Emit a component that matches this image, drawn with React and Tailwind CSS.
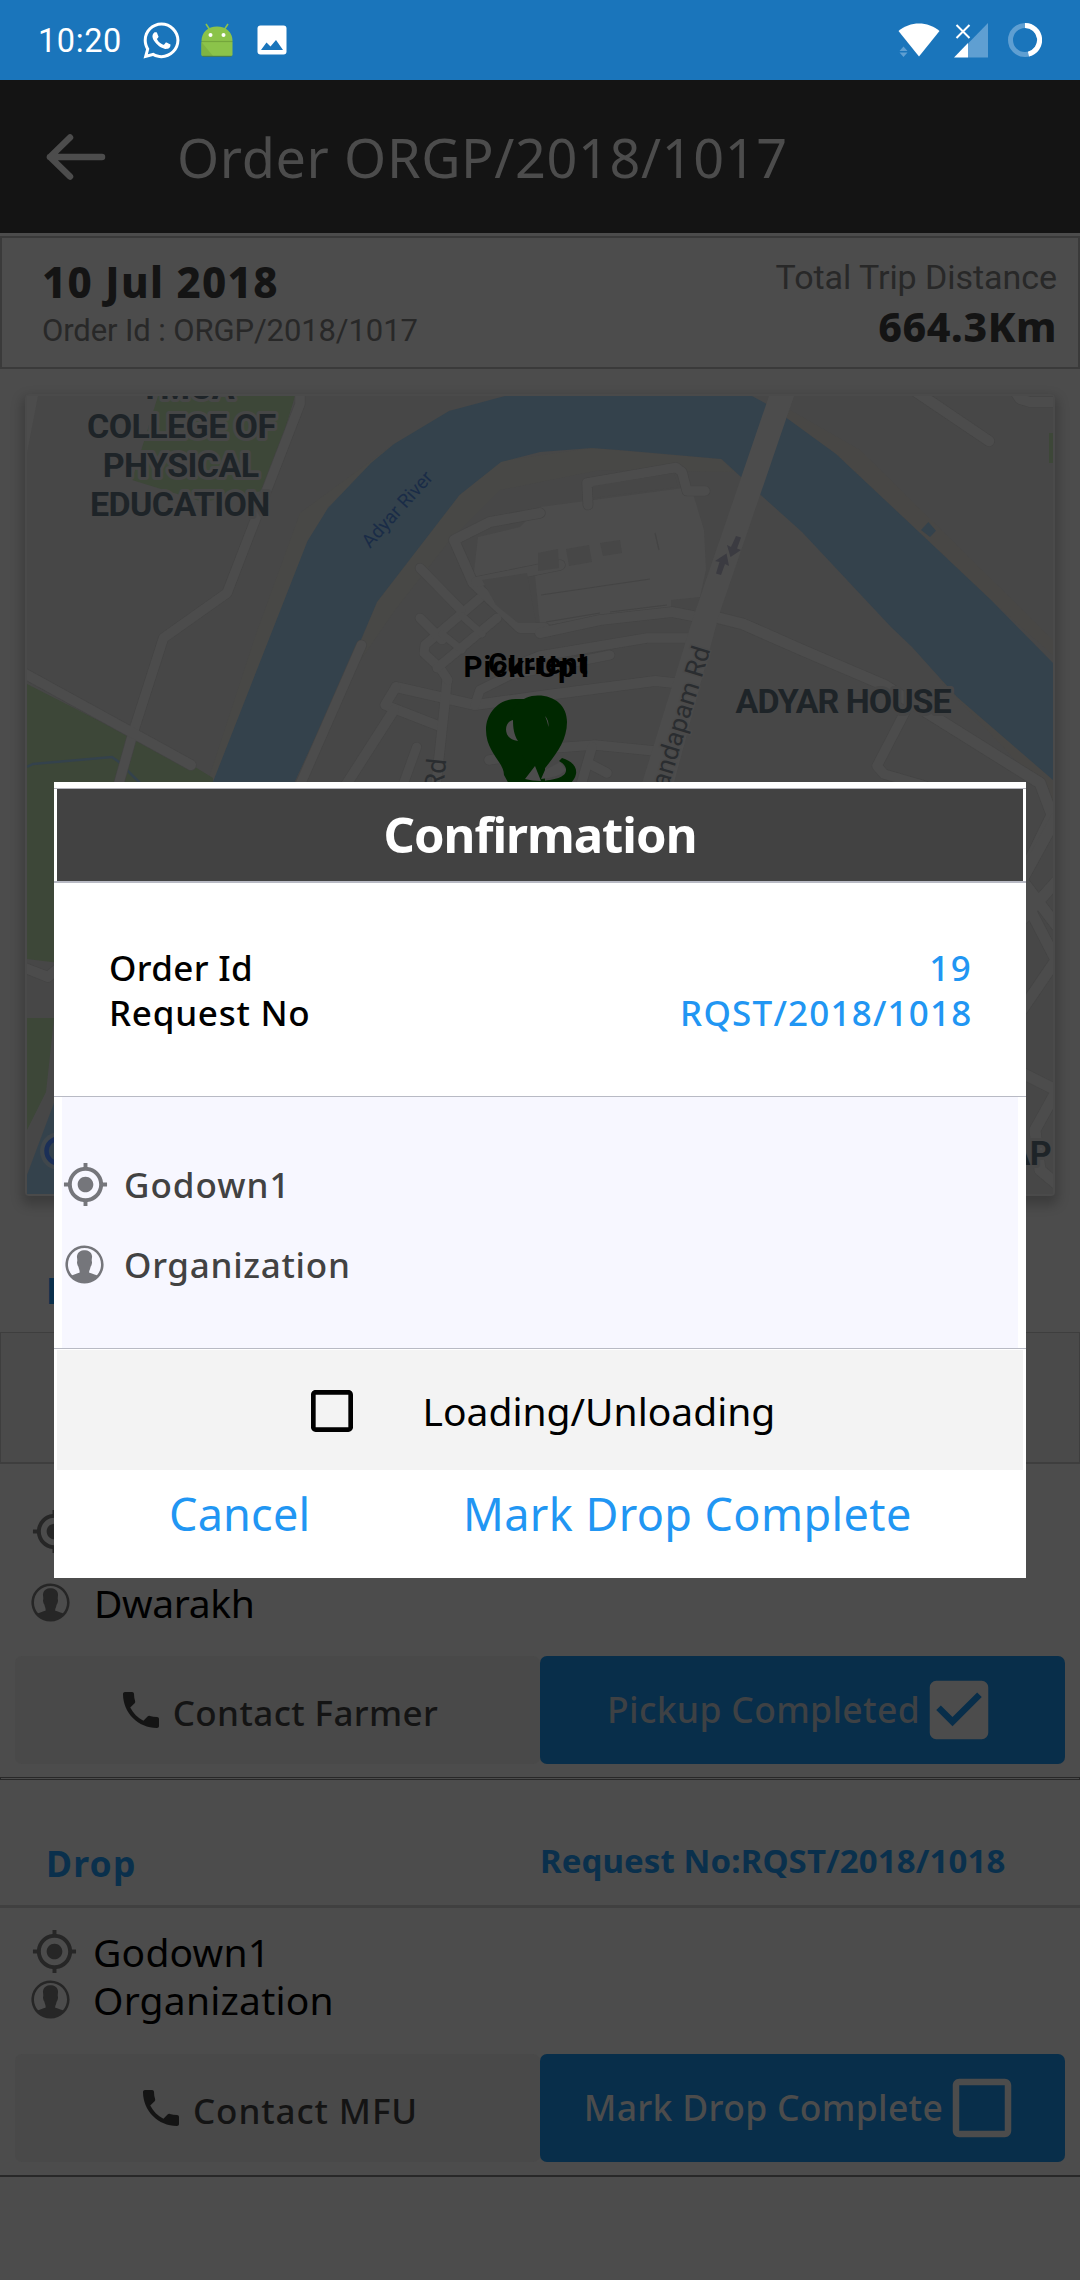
import React from "react";
import { MdCheckBox, MdCheckBoxOutlineBlank, MdMyLocation, MdPhone } from "react-icons/md";
import { IoIosContact } from "react-icons/io";
import { FaWhatsapp } from "react-icons/fa";

function StatusBar() {
  return (
    <div className="flex h-[80px] shrink-0 items-center bg-[#1a75bb] pl-[38px] pr-[38px] text-white">
      <span className="w-[105px] pt-[3px] font-[Roboto,sans-serif] text-[32.5px] leading-none tracking-[0.6px]">10:20</span>
      <FaWhatsapp className="h-[41px] w-[37px]" />
      <svg className="ml-[21px] h-[36px] w-[32px]" viewBox="0 0 32 36">
        <path d="M5 2l4 6M27 2l-4 6" stroke="#8bc34a" strokeWidth="1.6" />
        <path d="M.5 19C.5 10 7 4.500 16 4.500S31.500 10 31.500 19z" fill="#8bc34a" />
        <path d="M.5 20h31v12.500a1.500 1.500 0 0 1-1.500 1.500H2a1.500 1.500 0 0 1-1.500-1.500z" fill="#8bc34a" />
        <path d="M.5 19.500h31" stroke="#74a63c" strokeWidth="1.200" />
        <path d="M.5 20L12 34H2a1.500 1.500 0 0 1-1.500-1.500z" fill="#7fb443" />
        <path d="M1.500 34.300h29" stroke="#4d7d45" strokeWidth="1" />
        <circle cx="9.500" cy="13" r="2" fill="#fff" />
        <circle cx="22.500" cy="13" r="2" fill="#fff" />
      </svg>
      <svg className="ml-[23.500px] h-[30px] w-[30px]" viewBox="0 0 30 30">
        <rect x="0.500" y="0.500" width="29" height="29" rx="3" fill="#fff" />
        <path d="M4 25l5.500-7.500 4 4 5.500-6.500 7 10z" fill="#1a75bb" />
      </svg>
      <svg className="ml-auto h-[34px] w-[42px]" viewBox="0 0 42 34">
        <path d="M0.500 8C12-2 30-2 41.500 8L21 33.500z" fill="#fff" />
        <path d="M1.500 28l4-4.500 4 4.500zM1.500 29.500l4 4.500 4-4.500z" fill="#5f9fd2" />
      </svg>
      <svg className="ml-[14px] h-[35px] w-[34px]" viewBox="0 0 34 35">
        <path d="M34 0v34.500H14V20.500z" fill="#5f9fd2" />
        <path d="M14 20v14.500H0z" fill="#fff" />
        <path d="M2.500 2l13 13M15.500 2l-13 13" stroke="#fff" strokeWidth="2" />
      </svg>
      <svg className="ml-[20px] h-[34px] w-[34px]" viewBox="0 0 34 34">
        <circle cx="17" cy="17" r="14.500" fill="none" stroke="#5f9fd2" strokeWidth="5" />
        <path d="M17 2.500a14.500 14.500 0 0 1 3.500 28.600" fill="none" stroke="#fff" strokeWidth="5" />
      </svg>
    </div>
  );
}

function Header() {
  return (
    <div className="flex h-[153px] shrink-0 items-center bg-[#141414] pl-[46px] text-[#4c4c4c]">
      <svg className="h-[46px] w-[60px]" viewBox="0 0 60 46">
        <path d="M56 23H4M24 3.500L4 23l20 19.500" fill="none" stroke="currentColor" strokeWidth="6.500" strokeLinecap="round" strokeLinejoin="round" />
      </svg>
      <h1 className="ml-[71px] text-[54px] leading-none tracking-[0.62px]">Order ORGP/2018/1017</h1>
    </div>
  );
}

function Summary() {
  return (
    <div className="mt-[3px] flex h-[133px] shrink-0 justify-between border-2 border-[#3a3a3a] pl-[40px] pr-[21px]">
      <div className="flex flex-col pt-[19px]">
        <span className="text-[42px] font-extrabold leading-[50px] tracking-[1.3px] text-[#141414]">10 Jul 2018</span>
        <span className="font-[Roboto,sans-serif] text-[31px] leading-[48px] tracking-[-0.11px] text-[#282828]">Order Id : ORGP/2018/1017</span>
      </div>
      <div className="flex flex-col items-end pt-[15px]">
        <span className="font-[Roboto,sans-serif] text-[34px] leading-[48px] tracking-[-0.05px] text-[#282828]">Total Trip Distance</span>
        <span className="text-[41px] font-extrabold leading-[50px] tracking-[0.6px] text-[#141414]">664.3Km</span>
      </div>
    </div>
  );
}

const ROADS = [
  ["M300 390V404L227 593L163.500 638L133 733L117 790", 9.5],
  ["M20 671L191 765", 10],
  ["M361.500 645L300 785", 9.5],
  ["M416.700 747L403 785", 9],
  ["M396 687L475 705L540 696L655 681L674 683", 10],
  ["M396 687L385 705L439 726", 9.5],
  ["M394 710L346 785", 10],
  ["M447 680L445 702L436 785", 9.5],
  ["M448 680L440 668L424 653L425 645L480 598", 9],
  ["M475 705L480 690L510 675L610 655", 9],
  ["M420 568L461 610", 9],
  ["M420 618L442 640", 9],
  ["M497 618L437 668", 9],
  ["M442 634L462 650M462 616L482 634", 7],
  ["M540 513L490 522L454 540L473 583L520 628H545", 10],
  ["M476 582L560 565", 10],
  ["M540 633L600 620L672 612L693 616", 10],
  ["M520 664L540 656L647 638H690", 9.5],
  ["M540 749L595 745L655 751", 9.5],
  ["M592 747L581 785M588 763L607 773", 9.5],
  ["M489 760L530 754", 9.5],
  ["M588 505L587 483L676 467.500L682 472L687 491H705", 9.5],
  ["M715 617L743 624L802 650L884 685L912 703L1040 783L1052 815L1030 860", 11],
  ["M905 712L877 766L884 774L925 786", 9.5],
  ["M915 391L989 441", 10.5],
  ["M1014 390L1020 399L1030 402H1056", 10],
  ["M1056 818L1022 880L1056 925M1020 922L1056 882M1020 890L1056 960M1056 960L1022 1010M1024 900L1005 925", 11],
  ["M1020 1072L1056 1090M1056 1092L1035 1130L1040 1170L1058 1185", 11],
  ["M20 966L48 977L62 965", 10],
];

function MapView() {
  return (
    <svg className="block h-[798px] w-[1026px] bg-[#474747]" viewBox="27 396 1026 798">
      <path d="M475 410L449 411L394 444L300 513L255 637L205 790H240L328 507L510 396zM340 690L377 602L459 495L501 461L592 448L721 459L735 472L600 470L500 490L450 540L395 610z" fill="#4a4944" opacity=".45" />
      <path d="M785 419L836 454L991 600L1053 655V640L860 450L790 410zM940 680L1053 800V760L960 690z" fill="#4a4944" opacity=".4" />
      <path d="M158 396H295L267 490L203 502L132 480z" fill="#3d4738" />
      <path d="M27 684L131 737L113 790V963H60L27 959zM136 740L195 767L213 778V786H118zM27 1018H54L46 1092L27 1130z" fill="#3d4738" />
      <path d="M27 767L33 764L112 757L119 762L145 788" fill="none" stroke="#34424c" strokeWidth="2.500" />
      <path d="M209 792L307.500 541L328 508L371 463L394 444L449 411L505 396H752L765 403L788 419L836 454L919 532L991 600L1053 663V780L957 697L912 647L891 627L802 532L763 497L741 477L721.500 459L619 450L592 448L540 452L501 462L459.500 495L377 602L360 642L290 792z" fill="#34424c" />
      <path d="M27 1175L54 1103V1194H27z" fill="#34424c" />
      <path d="M928.400 522L936 530.700L930 537L921 530z" fill="#34424c" />
      <path d="M1049 433h4v30h-4z" fill="#3d4738" />
      <path d="M27 396H38L27 453z" fill="#4c4c4c" />
      <path d="M478 537L520 527L540 507L691 487L704 530L706 570L700 597L671 600V608L540 626L535 575L473 580z" fill="#4c4c4c" />
      {ROADS.map(([d, w]) => (
        <path key={d} d={d} fill="none" stroke="#444444" strokeWidth={w + 1.2} strokeLinecap="round" strokeLinejoin="round" />
      ))}
      {ROADS.map(([d, w]) => (
        <path key={d} d={d} fill="none" stroke="#4c4c4c" strokeWidth={w} strokeLinecap="round" strokeLinejoin="round" />
      ))}
      <path d="M769 396H794L719 615L672 790H640L693 618z" fill="#4c4c4c" />
      <path d="M538 553L558 549L559 568L538 571zM566 549L589 545L592 562L569 566zM600 543L620 540L622 553L603 556zM482 580L527 573L536 623H518L496 605zM593 486L674 473L678 487L593 498z" fill="#474747" />
      <path d="M541 595L650 579M655 533L659 550M610 612L667 605M546 622L600 613" stroke="#444" strokeWidth="1.200" />
      <path d="M741 537.500L736 536L731 547L727 545L730.500 557L741 550L737 548.500zM716 573.500L721 575L725 564L729 566L726.500 553.500L715 561L719.500 562z" fill="#3b3b41" />
      <g fontFamily="Roboto, sans-serif" fontSize="34" fontWeight="700" fill="#1e2428" stroke="#474747" strokeWidth="6" paintOrder="stroke" strokeLinejoin="round" letterSpacing="-0.600">
        <text x="139.500" y="398.700" letterSpacing="-0.300">YMCA</text>
        <text x="87" y="437.700">COLLEGE OF</text>
        <text x="102.700" y="476.700">PHYSICAL</text>
        <text x="90" y="515.700">EDUCATION</text>
        <text x="735.600" y="713" letterSpacing="-1">ADYAR HOUSE</text>
        <text x="1007.500" y="1165">AP</text>
      </g>
      <text transform="translate(370 549) rotate(-48)" fontFamily="Roboto, sans-serif" fontSize="19" fill="#1a2c47">Adyar River</text>
      <text transform="translate(443 791) rotate(-84)" fontFamily="Roboto, sans-serif" fontSize="27" fill="#2a2d30">Rd</text>
      <text transform="translate(669 785) rotate(-73)" x="-27" fontFamily="Roboto, sans-serif" fontSize="26" fill="#2a2d30" stroke="#4a4a4a" strokeWidth="3" paintOrder="stroke">Mandapam Rd</text>
      <path d="M516 699C499 699 486 713 486 730C486 752 504 762 504 775L510 786H545V700L525 699z" fill="#002800" />
      <path d="M538 695.500C521 695.500 510 708 510 724C510 745 530 760 535 782C545 765 567 748 567 722C567 706 555 695.500 538 695.500z" fill="#002800" />
      <path d="M513 720C503 722 503 740 518 741C514 735 513 728 513 720z" fill="#4c4c4c" />
      <path d="M545 716Q549 720 548.500 727Q547 720 545 716z" fill="#4c4c4c" />
      <path d="M535 766L525 779Q532 781 541 781zM541 779Q558 778 566 770L560 762L545 770z" fill="#4c4c4c" />
      <path d="M562 758C574 762 577 768 576 774Q575 779 570 784H540V781C555 780 567 777 566 769Q565 764 559 761z" fill="#002800" />
      <g fontFamily="Roboto, sans-serif" fontSize="29.500" fontWeight="700" fill="#000">
        <text x="463.500" y="676.700" letterSpacing="0.900">Pick-Up1</text>
        <text x="488" y="674">Current</text>
      </g>
      <circle cx="59" cy="1151" r="19" fill="#4c4c4c" opacity=".5" />
      <circle cx="59" cy="1151" r="12.500" fill="#34424c" stroke="#1b2f57" strokeWidth="4.500" />
    </svg>
  );
}

const INFO_TEXT = {
  Godown1: "text-[39px] leading-none tracking-[0.2px] text-black",
  Organization: "text-[39px] leading-none tracking-[0.22px] text-black",
  Dwarakh: "pl-[1px] text-[39px] leading-none tracking-[-0.4px] text-black",
};

function InfoRow({ kind, text, tall }) {
  return (
    <div className={tall ? "flex h-[94px] items-center" : "flex h-[48px] items-center"}>
      <span className="flex w-[67px] shrink-0 text-[#262626]">
        {kind === "place" ? <MdMyLocation className="ml-[5px] h-[47px] w-[47px]" /> : <IoIosContact className="ml-[0.5px] h-[47px] w-[47px]" />}
      </span>
      {text && <span className={INFO_TEXT[text]}>{text}</span>}
    </div>
  );
}

function SectionTitle({ title, request }) {
  return (
    <div className="flex h-[84px] items-center pl-[46px] font-bold text-[#0a304c]">
      <span className="w-[494px] pt-[1px] text-[35.5px] leading-none tracking-[1.2px]">{title}</span>
      {request && <span className="pb-[5px] text-[33px] leading-none tracking-[0.1px]">{request}</span>}
    </div>
  );
}

function Actions({ contact, action, done }) {
  return (
    <div className="flex px-[15px]">
      <div className="flex h-[108px] w-[525px] items-center justify-center rounded-[7px] bg-[#494949] text-[#141414]">
        <MdPhone className="h-[48px] w-[48px]" />
        <span className={done ? "ml-[8px] pt-[5px] text-[35px] font-medium leading-none tracking-[0.4px]" : "ml-[8px] pt-[5px] text-[35px] font-medium leading-none tracking-[0.9px]"}>{contact}</span>
      </div>
      <div className="flex h-[108px] w-[525px] items-center justify-center rounded-[7px] bg-[#082e4a] text-[#4c4c4c]">
        <span className={done ? "text-[35.5px] font-medium leading-none tracking-[0.32px] text-[#3e4144]" : "text-[35.5px] font-medium leading-none tracking-[0.3px]"}>{action}</span>
        {done ? <MdCheckBox className="h-[78px] w-[78px]" /> : <MdCheckBoxOutlineBlank className="h-[78px] w-[78px]" />}
      </div>
    </div>
  );
}

function ConfirmDialog() {
  return (
    <div className="absolute left-[54px] top-[782px] flex h-[796px] w-[972px] flex-col bg-white pt-[6px]">
      <div className="border-t border-[#b5b5bc]" />
      <div className="mx-[3px] flex h-[92px] items-center justify-center bg-[#424242] pb-[2px] text-[49px] font-bold leading-none tracking-[-1px] text-white">Confirmation</div>
      <div className="h-[2px] bg-[#b8bac4]" />
      <div className="flex h-[213px] justify-between pl-[55px] pr-[53.5px] pt-[62px] text-[35px] font-medium leading-[45px]">
        <div className="flex flex-col text-black">
          <span className="tracking-[0.35px]">Order Id</span>
          <span className="tracking-[0.75px]">Request No</span>
        </div>
        <div className="flex flex-col items-end text-[#2196f3]">
          <span className="tracking-[1.6px]">19</span>
          <span className="tracking-[1.2px]">RQST/2018/1018</span>
        </div>
      </div>
      <div className="h-px bg-[#b8bac4]" />
      <div className="mx-[8px] h-[251px] bg-[#f7f7ff] pt-[47px] text-[35px] font-medium leading-none text-[#424242]">
        <div className="flex h-[80px] items-center">
          <MdMyLocation className="mr-[15px] h-[47px] w-[47px] text-[#75767b]" />
          <span className="tracking-[1px]">Godown1</span>
        </div>
        <div className="flex h-[80px] items-center">
          <IoIosContact className="-ml-[1.5px] mr-[16.5px] h-[47px] w-[47px] text-[#75767b]" />
          <span className="tracking-[0.72px]">Organization</span>
        </div>
      </div>
      <div className="h-px bg-[#b8bac4]" />
      <div className="mx-[3px] mt-px flex h-[120px] items-center bg-[#f3f3f3] pl-[247px] pt-[1px] text-black">
        <MdCheckBoxOutlineBlank className="h-[56px] w-[56px]" />
        <span className="ml-[62.5px] text-[39px] leading-none">Loading/Unloading</span>
      </div>
      <div className="flex h-[86px] items-center pl-[115px] text-[45px] leading-none text-[#2196f3]">
        <span className="w-[294px] tracking-[0.2px]">Cancel</span>
        <span className="tracking-[0.4px]">Mark Drop Complete</span>
      </div>
    </div>
  );
}

export default function App() {
  return (
    <div className="relative flex h-[2280px] w-[1080px] flex-col overflow-hidden whitespace-nowrap bg-[#4c4c4c] font-['Noto_Sans',sans-serif]">
      <StatusBar />
      <Header />
      <Summary />
      <div className="mx-[25px] mt-[25px] h-[802px] shrink-0 rounded-[4px] bg-[#4a4a4a] p-[2px] shadow-[0_6px_12px_3px_rgba(0,0,0,0.22)]">
        <MapView />
      </div>
      <div className="pt-[52px]">
        <SectionTitle title="Pickup" />
        <div className="h-[132px] border border-b-2 border-[#3e3e3e] bg-[#4a4a4a]" />
        <div className="pl-[26px] pt-[20px]">
          <InfoRow kind="place" tall />
          <InfoRow kind="person" text="Dwarakh" />
        </div>
        <div className="mt-[30px]">
          <Actions contact="Contact Farmer" action="Pickup Completed" done />
        </div>
        <div className="mt-[13px] h-[3px] border border-[#282828]" />
      </div>
      <div className="pt-[41px]">
        <SectionTitle title="Drop" request="Request No:RQST/2018/1018" />
        <div className="h-[3px] bg-[#404040]" />
        <div className="pl-[26px] pt-[19px]">
          <InfoRow kind="place" text="Godown1" />
          <InfoRow kind="person" text="Organization" />
        </div>
        <div className="mt-[31px]">
          <Actions contact="Contact MFU" action="Mark Drop Complete" />
        </div>
        <div className="mt-[13px] h-[2px] bg-[#282828]" />
      </div>
      <ConfirmDialog />
    </div>
  );
}
